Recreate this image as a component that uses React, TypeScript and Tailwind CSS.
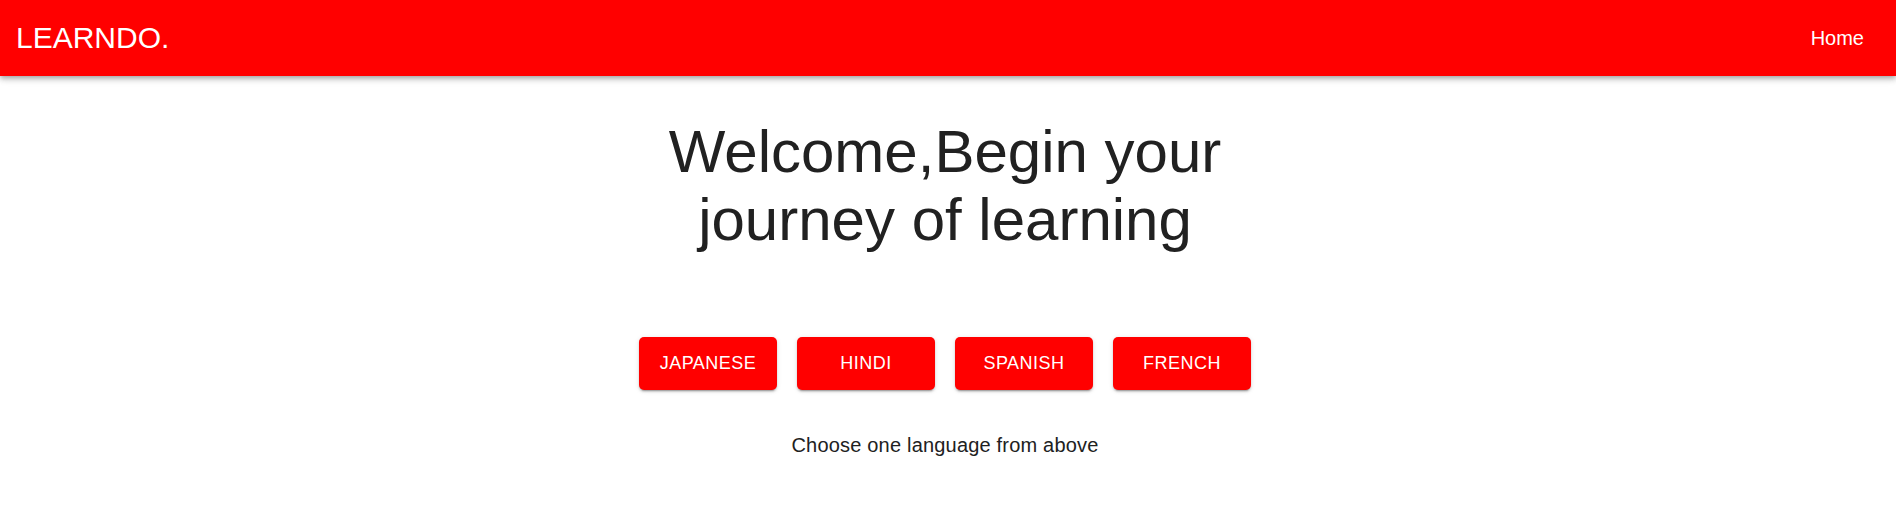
import React from "react";

const languages = ["JAPANESE", "HINDI", "SPANISH", "FRENCH"];

export default function App() {
  return (
    <div className="min-h-screen bg-white font-['Liberation_Sans',Arial,sans-serif]">
      <header className="flex h-[76px] items-center justify-between bg-[#ff0000] pl-4 pr-8 shadow-[0_2px_4px_-1px_rgba(0,0,0,0.2),0_4px_5px_0_rgba(0,0,0,0.14),0_1px_10px_0_rgba(0,0,0,0.12)]">
        <div className="text-[30px] leading-none text-white">LEARNDO.</div>
        <nav className="text-[20px] leading-none text-white">Home</nav>
      </header>

      <main className="flex flex-col items-center pr-[6px]">
        <h1 className="mt-[42px] w-[600px] text-center text-[60px] leading-[68px] font-normal text-[#212121]">
          Welcome,Begin your journey of learning
        </h1>

        <div className="mt-[83px] flex gap-5">
          {languages.map((lang) => (
            <button
              key={lang}
              className="flex h-[53px] w-[138px] items-center justify-center rounded-[5px] bg-[#ff0000] text-[18px] tracking-[0.5px] text-white shadow-[0_3px_1px_-2px_rgba(0,0,0,0.2),0_2px_2px_0_rgba(0,0,0,0.14),0_1px_5px_0_rgba(0,0,0,0.12)]"
            >
              {lang}
            </button>
          ))}
        </div>

        <p className="mt-[43px] text-[20px] leading-[24px] tracking-[0.19px] text-[#212121]">
          Choose one language from above
        </p>
      </main>
    </div>
  );
}
